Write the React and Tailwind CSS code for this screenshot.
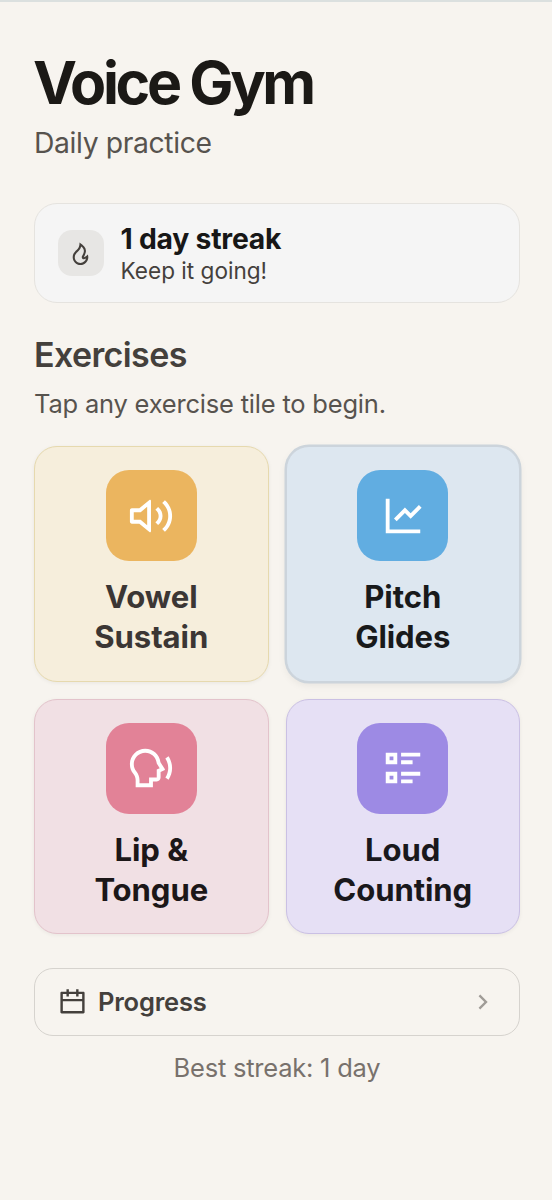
import React from "react";
import {
  RiVolumeUpLine,
  RiLineChartLine,
  RiSpeakLine,
  RiFireLine,
  RiCalendarLine,
  RiArrowRightSLine,
} from "react-icons/ri";

function ListIcon({ className }) {
  return (
    <svg viewBox="0 0 24 24" fill="currentColor" className={className}>
      <path d="M11 4H21V6H11V4ZM11 8H17V10H11V8ZM11 14H21V16H11V14ZM11 18H17V20H11V18ZM3 4H9V10H3V4ZM5 6V8H7V6H5ZM3 14H9V20H3V14ZM5 16V18H7V16H5Z" />
    </svg>
  );
}

const tiles = [
  {
    lines: ["Vowel", "Sustain"],
    Icon: RiVolumeUpLine,
    card: "border-[#e6d9ae] bg-[#f6eedc] shadow-[0_1px_4px_rgba(0,0,0,0.06)]",
    badge: "bg-[#ebb55f]",
    text: "text-[#3b3634]",
  },
  {
    lines: ["Pitch", "Glides"],
    Icon: RiLineChartLine,
    card: "border-[#ccd4dc] bg-[#dde7f0] shadow-[0_0_0_1.5px_#ccd4db,0_3px_9px_rgba(0,0,0,0.07)]",
    badge: "bg-[#61ade1]",
    text: "text-[#181a1b]",
  },
  {
    lines: ["Lip &", "Tongue"],
    Icon: RiSpeakLine,
    card: "border-[#e3c3cb] bg-[#f1e0e4] shadow-[0_1px_4px_rgba(0,0,0,0.06)]",
    badge: "bg-[#e28297]",
    text: "text-[#1c1718]",
  },
  {
    lines: ["Loud", "Counting"],
    Icon: ListIcon,
    card: "border-[#cac0e4] bg-[#e6e0f5] shadow-[0_1px_4px_rgba(0,0,0,0.06)]",
    badge: "bg-[#9d8ae4]",
    text: "text-[#19181c]",
  },
];

function Tile({ lines, Icon, card, badge, text }) {
  return (
    <button
      className={`flex h-[235.5px] flex-col items-center rounded-[23px] border-[1.4px] pt-[23px] ${card}`}
    >
      <span className={`flex size-[91px] items-center justify-center rounded-[23px] text-white ${badge}`}>
        <Icon className="size-[46px]" />
      </span>
      <span className={`mt-4 text-[31.1px] leading-10 font-bold tracking-[-0.003em] ${text}`}>
        {lines[0]}
        <br />
        {lines[1]}
      </span>
    </button>
  );
}

export default function App() {
  return (
    <main className="min-h-[1200px] w-full border-t-2 border-[#dbe0df] bg-[#f7f4ef] pr-[32px] pl-[34px] pt-[49px] font-['Inter','Liberation_Sans',sans-serif]">
      <h1 className="-ml-px text-[59px] leading-[64px] font-bold tracking-[-0.057em] text-[#1b1916]">Voice Gym</h1>
      <p className="mt-[7.5px] text-[28.3px] leading-10 tracking-[-0.013em] text-[#57534e]">Daily practice</p>

      <section className="mt-[40.5px] flex h-[100px] items-center gap-[17px] rounded-[23px] border-[1.4px] border-[#e5e3df] bg-[#f5f5f5] pl-[23px]">
        <span className="flex size-[45.5px] items-center justify-center rounded-[14px] bg-[#e7e6e4] text-[#44403c]">
          <RiFireLine className="size-[25px]" />
        </span>
        <div className="pt-[2px]">
          <p className="text-[28.3px] leading-[34px] font-bold tracking-[-0.008em] text-[#171717]">1 day streak</p>
          <p className="text-[22.6px] leading-[30px] text-[#44403c]">Keep it going!</p>
        </div>
      </section>

      <h2 className="mt-[30px] text-[34px] leading-[44px] font-semibold tracking-[-0.018em] text-[#44403c]">Exercises</h2>
      <p className="mt-[8.5px] text-[25.5px] leading-9 tracking-[-0.008em] text-[#57534e]">Tap any exercise tile to begin.</p>

      <div className="mt-[24.5px] grid grid-cols-2 gap-[17px]">
        {tiles.map((tile) => (
          <Tile key={tile.lines[0]} {...tile} />
        ))}
      </div>

      <button className="mt-[34px] flex h-[68px] w-full items-center rounded-[19px] border-[1.4px] border-[#d6d3ce] pr-[22px] pl-[23px] text-[#44403c]">
        <RiCalendarLine className="mt-px size-[29px]" />
        <span className="ml-[11px] text-[25.5px] leading-9 font-semibold tracking-[-0.008em]">Progress</span>
        <RiArrowRightSLine className="ml-auto size-[28px] text-[#a09c97]" />
      </button>
      <p className="mt-[14px] text-center text-[25.5px] leading-9 tracking-[-0.009em] text-[#78716c]">Best streak: 1 day</p>
    </main>
  );
}
